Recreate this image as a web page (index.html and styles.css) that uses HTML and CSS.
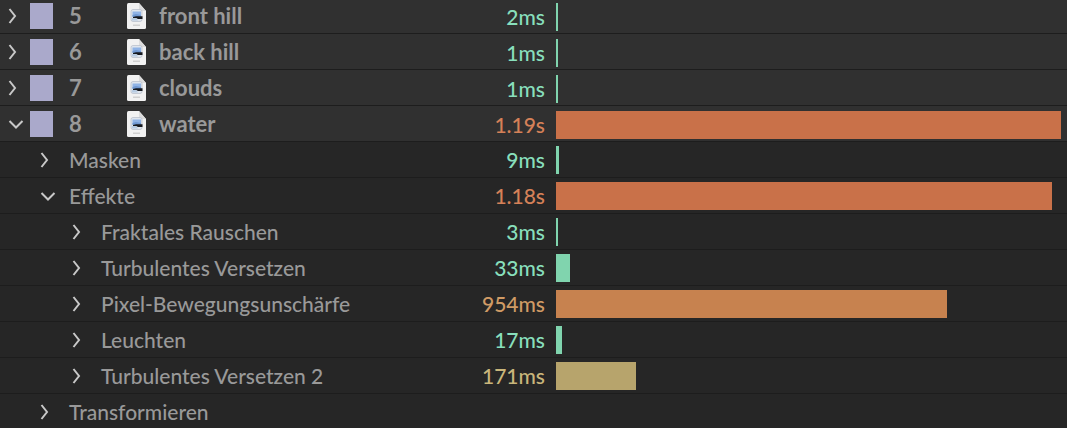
FILE: index.html
```html
<!DOCTYPE html>
<html lang="de">
<head>
<meta charset="utf-8">
<title>Renderzeiten</title>
<link rel="stylesheet" href="styles.css">
</head>
<body>
<svg class="defs" aria-hidden="true">
  <symbol id="right" viewBox="0 0 16 16"><path d="M1.500 1 L7 8 L1.500 15" /></symbol>
  <symbol id="down" viewBox="0 0 16 16"><path d="M1.500 5 L8 11.500 L14.500 5" /></symbol>
  <symbol id="file" viewBox="0 0 19 26">
    <path fill="#f1f1f1" d="M1.500 0 H12 L19 8 V24.500 Q19 26 17.500 26 H1.500 Q0 26 0 24.500 V1.500 Q0 0 1.500 0Z"/>
    <path fill="#dcdcdc" d="M12 0 L19 8 H13.500 Q12 8 12 6.500Z"/>
    <rect x="4" y="6.500" width="11" height="12" rx="2" fill="#dfe5ed" stroke="#b4bcc8" stroke-width=".7"/>
    <rect x="5.500" y="8.500" width="8.500" height="5" fill="#8fb3e6"/>
    <path fill="#6f97d0" d="M5.500 12 L9 11 L14 12 V14 H5.500Z"/>
    <path fill="#16191f" d="M6 14 L9 13.300 H15.500 V16 H11 L9 15H6Z"/>
    <path fill="#b7cbe2" d="M5 15 H9 L11 17.500 H5Z"/>
    <rect x="6" y="21.500" width="7" height="1.500" fill="#cfcfcf"/>
  </symbol>
</svg>
<ul class="timings">
  <li class="row layer"><div class="label"><button class="toggle" aria-label="front hill aufklappen"><svg><use href="#right"/></svg></button><span class="swatch"></span><span class="number">5</span><svg class="file"><use href="#file"/></svg><span class="name">front hill</span></div><span class="time green">2ms</span><div class="track"><div class="bar green" style="width:0.4%"></div></div></li>
  <li class="row layer"><div class="label"><button class="toggle" aria-label="back hill aufklappen"><svg><use href="#right"/></svg></button><span class="swatch"></span><span class="number">6</span><svg class="file"><use href="#file"/></svg><span class="name">back hill</span></div><span class="time green">1ms</span><div class="track"><div class="bar green" style="width:0.4%"></div></div></li>
  <li class="row layer"><div class="label"><button class="toggle" aria-label="clouds aufklappen"><svg><use href="#right"/></svg></button><span class="swatch"></span><span class="number">7</span><svg class="file"><use href="#file"/></svg><span class="name">clouds</span></div><span class="time green">1ms</span><div class="track"><div class="bar green" style="width:0.4%"></div></div></li>
  <li class="row layer"><div class="label"><button class="toggle open" aria-label="water zuklappen"><svg><use href="#down"/></svg></button><span class="swatch"></span><span class="number">8</span><svg class="file"><use href="#file"/></svg><span class="name">water</span></div><span class="time red">1.19s</span><div class="track"><div class="bar red" style="width:100%"></div></div></li>
  <li class="row group"><div class="label"><button class="toggle" aria-label="Masken aufklappen"><svg><use href="#right"/></svg></button><span class="name">Masken</span></div><span class="time green">9ms</span><div class="track"><div class="bar green" style="width:0.6%"></div></div></li>
  <li class="row group"><div class="label"><button class="toggle open" aria-label="Effekte zuklappen"><svg><use href="#down"/></svg></button><span class="name">Effekte</span></div><span class="time red">1.18s</span><div class="track"><div class="bar red" style="width:98.3%"></div></div></li>
  <li class="row effect"><div class="label"><button class="toggle" aria-label="Fraktales Rauschen aufklappen"><svg><use href="#right"/></svg></button><span class="name">Fraktales Rauschen</span></div><span class="time green">3ms</span><div class="track"><div class="bar green" style="width:0.4%"></div></div></li>
  <li class="row effect"><div class="label"><button class="toggle" aria-label="Turbulentes Versetzen aufklappen"><svg><use href="#right"/></svg></button><span class="name">Turbulentes Versetzen</span></div><span class="time green">33ms</span><div class="track"><div class="bar green" style="width:2.8%"></div></div></li>
  <li class="row effect"><div class="label"><button class="toggle" aria-label="Pixel-Bewegungsunschärfe aufklappen"><svg><use href="#right"/></svg></button><span class="name">Pixel-Bewegungsunschärfe</span></div><span class="time orange">954ms</span><div class="track"><div class="bar orange" style="width:77.5%"></div></div></li>
  <li class="row effect"><div class="label"><button class="toggle" aria-label="Leuchten aufklappen"><svg><use href="#right"/></svg></button><span class="name">Leuchten</span></div><span class="time green">17ms</span><div class="track"><div class="bar green" style="width:1.25%"></div></div></li>
  <li class="row effect"><div class="label"><button class="toggle" aria-label="Turbulentes Versetzen 2 aufklappen"><svg><use href="#right"/></svg></button><span class="name">Turbulentes Versetzen 2</span></div><span class="time yellow">171ms</span><div class="track"><div class="bar yellow" style="width:15.9%"></div></div></li>
  <li class="row group"><div class="label"><button class="toggle" aria-label="Transformieren aufklappen"><svg><use href="#right"/></svg></button><span class="name">Transformieren</span></div></li>
</ul>
</body>
</html>
```
FILE: styles.css
```css
* { box-sizing: border-box; }

body {
  margin: 0;
  overflow: hidden;
  background: #262626;
  color: #999;
  font: 500 21px/32px Lato, "Noto Sans", sans-serif;
}

.defs { display: none; }

.timings {
  list-style: none;
  margin: -2px 0 0;
  padding: 0;
}

.row {
  display: grid;
  grid-template-columns: 450px 95px 1fr;
  height: 36px;
  padding-right: 6px;
  border-bottom: 1px solid #1d1d1d;
}

.layer { background: #303030; }

.label {
  display: flex;
  align-items: center;
  padding-left: 4px;
  white-space: nowrap;
}

.group .label { padding-left: 36px; }
.effect .label { padding-left: 68px; }

.toggle {
  display: flex;
  flex: none;
  width: 26px;
  height: 32px;
  padding: 8px 0 8px 4px;
  border: 0;
  background: none;
}

.toggle svg {
  width: 16px;
  height: 16px;
  fill: none;
  stroke: #c8c8c8;
  stroke-width: 2;
}

.group .toggle,
.effect .toggle { width: 33px; }

.swatch {
  width: 23px;
  height: 26px;
  background: #aaa9cb;
}

.number {
  width: 58px;
  margin-left: 16px;
}

.layer .number,
.layer .name {
  font-size: 22px;
  font-weight: bold;
}

.file {
  width: 19px;
  height: 26px;
  margin-right: 13px;
}

.time {
  align-self: center;
  text-align: right;
}

.layer .time { padding-top: 3px; }

.track {
  height: 28px;
  margin: 4px 0 0 11px;
}

.layer .track { margin-top: 5px; }

.bar {
  height: 100%;
}

.time.green { color: #88dfbc; }
.time.red { color: #d58158; }
.time.orange { color: #d09b65; }
.time.yellow { color: #c9b67b; }

.bar.green { background: #80d4ae; }
.bar.red { background: #c97149; }
.bar.orange { background: #c7824f; }
.bar.yellow { background: #b7a46c; }
```
